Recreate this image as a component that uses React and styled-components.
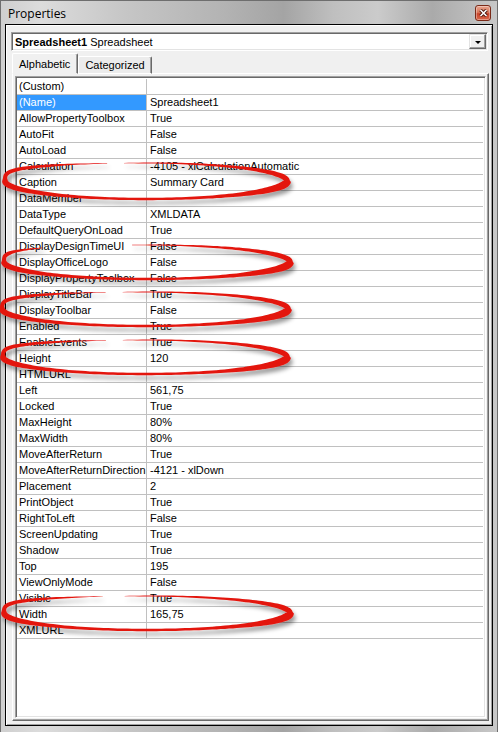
import React from 'react'
import styled, { createGlobalStyle } from 'styled-components'

const rows = [
  ['(Custom)', ''],
  ['(Name)', 'Spreadsheet1'],
  ['AllowPropertyToolbox', 'True'],
  ['AutoFit', 'False'],
  ['AutoLoad', 'False'],
  ['Calculation', '-4105 - xlCalculationAutomatic'],
  ['Caption', 'Summary Card'],
  ['DataMember', ''],
  ['DataType', 'XMLDATA'],
  ['DefaultQueryOnLoad', 'True'],
  ['DisplayDesignTimeUI', 'False'],
  ['DisplayOfficeLogo', 'False'],
  ['DisplayPropertyToolbox', 'False'],
  ['DisplayTitleBar', 'True'],
  ['DisplayToolbar', 'False'],
  ['Enabled', 'True'],
  ['EnableEvents', 'True'],
  ['Height', '120'],
  ['HTMLURL', ''],
  ['Left', '561,75'],
  ['Locked', 'True'],
  ['MaxHeight', '80%'],
  ['MaxWidth', '80%'],
  ['MoveAfterReturn', 'True'],
  ['MoveAfterReturnDirection', '-4121 - xlDown'],
  ['Placement', '2'],
  ['PrintObject', 'True'],
  ['RightToLeft', 'False'],
  ['ScreenUpdating', 'True'],
  ['Shadow', 'True'],
  ['Top', '195'],
  ['ViewOnlyMode', 'False'],
  ['Visible', 'True'],
  ['Width', '165,75'],
  ['XMLURL', ''],
]

// hand drawn red loops (page coordinates)
const loops = [
  { cx: 146, cy: 181, rx: 141, ry: 18, t0: -99, t1: 254 },
  { cx: 147, cy: 262, rx: 143, ry: 17, t0: -96, t1: 223 },
  { cx: 145, cy: 309, rx: 143, ry: 17, t0: -99, t1: 254 },
  { cx: 145, cy: 357, rx: 142, ry: 17, t0: -99, t1: 254 },
  { cx: 147, cy: 613, rx: 143, ry: 17, t0: -99, t1: 252 },
]

function loopPath({ cx, cy, rx, ry, t0, t1 }) {
  const a0 = (t0 * Math.PI) / 180
  const a1 = (t1 * Math.PI) / 180
  const pt = (t) => {
    const c = Math.cos(t)
    const s = Math.sin(t)
    const x = cx + rx * c
    const y = c < 0 && s < 0 ? cy - ry * Math.sqrt(-s) : cy + ry * s
    return [x, y]
  }
  const n = 180
  const left = []
  const right = []
  for (let i = 0; i <= n; i++) {
    const t = a0 + ((a1 - a0) * i) / n
    const c = Math.cos(t)
    const s = Math.sin(t)
    const [x, y] = pt(t)
    const [x1, y1] = pt(t - 0.01)
    const [x2, y2] = pt(t + 0.01)
    const dx = x2 - x1
    const dy = y2 - y1
    const len = Math.hypot(dx, dy) || 1
    const nx = -dy / len
    const ny = dx / len
    let w = 2.4 + 5.5 * Math.pow(Math.max(c, 0), 3) + 3.5 * Math.pow(Math.max(-c, 0), 3)
    if (s < 0) w *= 0.7
    const f = Math.min(1, (t - a0) / 0.5, (a1 - t) / 0.5)
    w *= 0.25 + 0.75 * f
    left.push([x + (nx * w) / 2, y + (ny * w) / 2])
    right.push([x - (nx * w) / 2, y - (ny * w) / 2])
  }
  const all = left.concat(right.reverse())
  return 'M' + all.map((p) => p[0].toFixed(1) + ' ' + p[1].toFixed(1)).join(' L') + ' Z'
}

export default function App() {
  return (
    <>
      <GlobalStyle />
      <Window>
        <TitleBar>
          <Title>Properties</Title>
          <CloseButton>
            <svg width="9" height="8" viewBox="0 0 9 8">
              <path d="M1.5 1 L7.5 7 M7.5 1 L1.5 7" stroke="#4a160b" strokeWidth="3.4" />
              <path d="M1.5 1 L7.5 7 M7.5 1 L1.5 7" stroke="#fff" strokeWidth="1.6" />
            </svg>
          </CloseButton>
        </TitleBar>

        <Frame>
          <Combo>
            <ComboText>
              <b>Spreadsheet1</b> Spreadsheet
            </ComboText>
            <DropButton>
              <Arrow />
            </DropButton>
          </Combo>

          <TabStrip>
            <Tab $active>Alphabetic</Tab>
            <Tab>Categorized</Tab>
          </TabStrip>

          <TabPanel>
            <Grid>
              {rows.map(([name, value]) => (
                <Row key={name}>
                  <NameCell $selected={name === '(Name)'}>{name}</NameCell>
                  <ValueCell>{value}</ValueCell>
                </Row>
              ))}
            </Grid>
          </TabPanel>
        </Frame>

        <Overlay width="498" height="732" viewBox="0 0 498 732">
          <defs>
            <filter id="shade" x="-10%" y="-60%" width="120%" height="220%">
              <feDropShadow dx="2" dy="4" stdDeviation="2" floodColor="#000" floodOpacity="0.4" />
            </filter>
          </defs>
          {loops.map((l, i) => (
            <path key={i} d={loopPath(l)} fill="#e3160f" filter="url(#shade)" />
          ))}
        </Overlay>
      </Window>
    </>
  )
}

const GlobalStyle = createGlobalStyle`
  html, body {
    margin: 0;
    padding: 0;
    background: #c8c8c8;
  }
  body {
    font-family: "Liberation Sans", Arial, sans-serif;
  }
`

const Window = styled.div`
  position: relative;
  box-sizing: border-box;
  width: 498px;
  height: 732px;
  display: flex;
  flex-direction: column;
  border: 1px solid #6e6e6e;
  border-bottom: none;
  background: linear-gradient(
    90deg,
    #cfcfcf 0%,
    #dcdcdc 8%,
    #c6c6c6 25%,
    #b3b3b3 45%,
    #a4a4a4 57%,
    #bfbfbf 67%,
    #cbcbcb 76%,
    #aaaaaa 87%,
    #c8c8c8 100%
  );
`

const TitleBar = styled.div`
  height: 23px;
  flex: none;
  display: flex;
  align-items: center;
  justify-content: space-between;
  padding: 0 6px 0 7px;
`

const Title = styled.div`
  font-family: "Open Sans", "Liberation Sans", sans-serif;
  font-size: 12px;
  color: #000;
  margin-top: 1px;
`

const CloseButton = styled.div`
  box-sizing: border-box;
  width: 16px;
  height: 16px;
  align-self: flex-start;
  margin-top: 4px;
  display: flex;
  align-items: center;
  justify-content: center;
  border: 1px solid #7a2a18;
  border-radius: 3px;
  background: linear-gradient(180deg, #e9a48e 0%, #d9785c 45%, #c8432a 55%, #d8674a 100%);
  box-shadow: inset 0 0 0 1px rgba(255, 255, 255, 0.35);
`

const Frame = styled.div`
  flex: 1;
  display: flex;
  flex-direction: column;
  margin: 0 4px 6px 4px;
  padding: 7px 4px 4px 5px;
  border: 1px solid #000;
  background: #f0f0f0;
  box-shadow: inset 1px 1px 0 #ffffff, inset -1px -1px 0 #a0a0a0;
`

const Combo = styled.div`
  box-sizing: border-box;
  height: 19px;
  flex: none;
  display: flex;
  align-items: center;
  background: #fff;
  border: 1px solid;
  border-color: #a0a0a0 #ffffff #ffffff #a0a0a0;
  box-shadow: inset 1px 1px 0 #696969, inset -1px -1px 0 #e3e3e3;
  padding: 0 1px 0 3px;
`

const ComboText = styled.div`
  flex: 1;
  font-size: 11px;
  color: #000;
  white-space: nowrap;

  b {
    font-weight: bold;
  }
`

const DropButton = styled.div`
  box-sizing: border-box;
  width: 17px;
  height: 15px;
  display: flex;
  align-items: center;
  justify-content: center;
  background: #f0f0f0;
  border: 1px solid;
  border-color: #e3e3e3 #696969 #696969 #e3e3e3;
  box-shadow: inset -1px -1px 0 #a0a0a0, inset 1px 1px 0 #ffffff;
`

const Arrow = styled.div`
  width: 0;
  height: 0;
  border-left: 3px solid transparent;
  border-right: 3px solid transparent;
  border-top: 3px solid #000;
  margin-top: 1px;
`

const TabStrip = styled.div`
  flex: none;
  display: flex;
  align-items: flex-end;
  margin: 2px -1px 0 1px;
  height: 21px;
  position: relative;
  z-index: 1;
  margin-bottom: -1px;
`

const Tab = styled.div`
  box-sizing: border-box;
  height: ${(p) => (p.$active ? '21px' : '18px')};
  display: flex;
  align-items: center;
  padding: ${(p) => (p.$active ? '0 7px 0 6px' : '0 6px 1px 6px')};
  font-size: 11px;
  color: #000;
  background: ${(p) => (p.$active ? '#f0f0f0' : '#ececec')};
  border: 1px solid;
  border-color: #ffffff #696969 ${(p) => (p.$active ? '#f0f0f0' : '#ffffff')} #ffffff;
  border-radius: 2px 2px 0 0;
  box-shadow: inset -1px 0 0 #a0a0a0;
`

const TabPanel = styled.div`
  flex: 1;
  min-height: 0;
  display: flex;
  margin: 0 -1px 0 1px;
  padding: 2px;
  border: 1px solid;
  border-color: #ffffff #696969 #696969 #ffffff;
  box-shadow: inset -1px -1px 0 #a0a0a0;
`

const Grid = styled.div`
  flex: 1;
  min-height: 0;
  overflow: hidden;
  background: #fff;
  border: 1px solid;
  border-color: #a0a0a0 #ffffff #ffffff #a0a0a0;
  box-shadow: inset 1px 1px 0 #696969, inset -1px -1px 0 #e3e3e3;
  padding: 2px 2px 1px 1px;
`

const Row = styled.div`
  display: flex;
  height: 16px;
  box-sizing: border-box;
  border-bottom: 1px solid #c0c0c0;
  font-size: 11px;
  line-height: 15px;
  color: #000;
`

const NameCell = styled.div`
  width: 130px;
  flex: none;
  box-sizing: border-box;
  padding-left: 2px;
  white-space: nowrap;
  overflow: hidden;
  border-right: 1px solid #c0c0c0;
  background: ${(p) => (p.$selected ? '#3399ff' : 'transparent')};
  color: ${(p) => (p.$selected ? '#ffffff' : '#000000')};
`

const ValueCell = styled.div`
  flex: 1;
  padding-left: 3px;
  white-space: nowrap;
  overflow: hidden;
`

const Overlay = styled.svg`
  position: absolute;
  top: -1px;
  left: -1px;
  pointer-events: none;
  z-index: 5;
`
